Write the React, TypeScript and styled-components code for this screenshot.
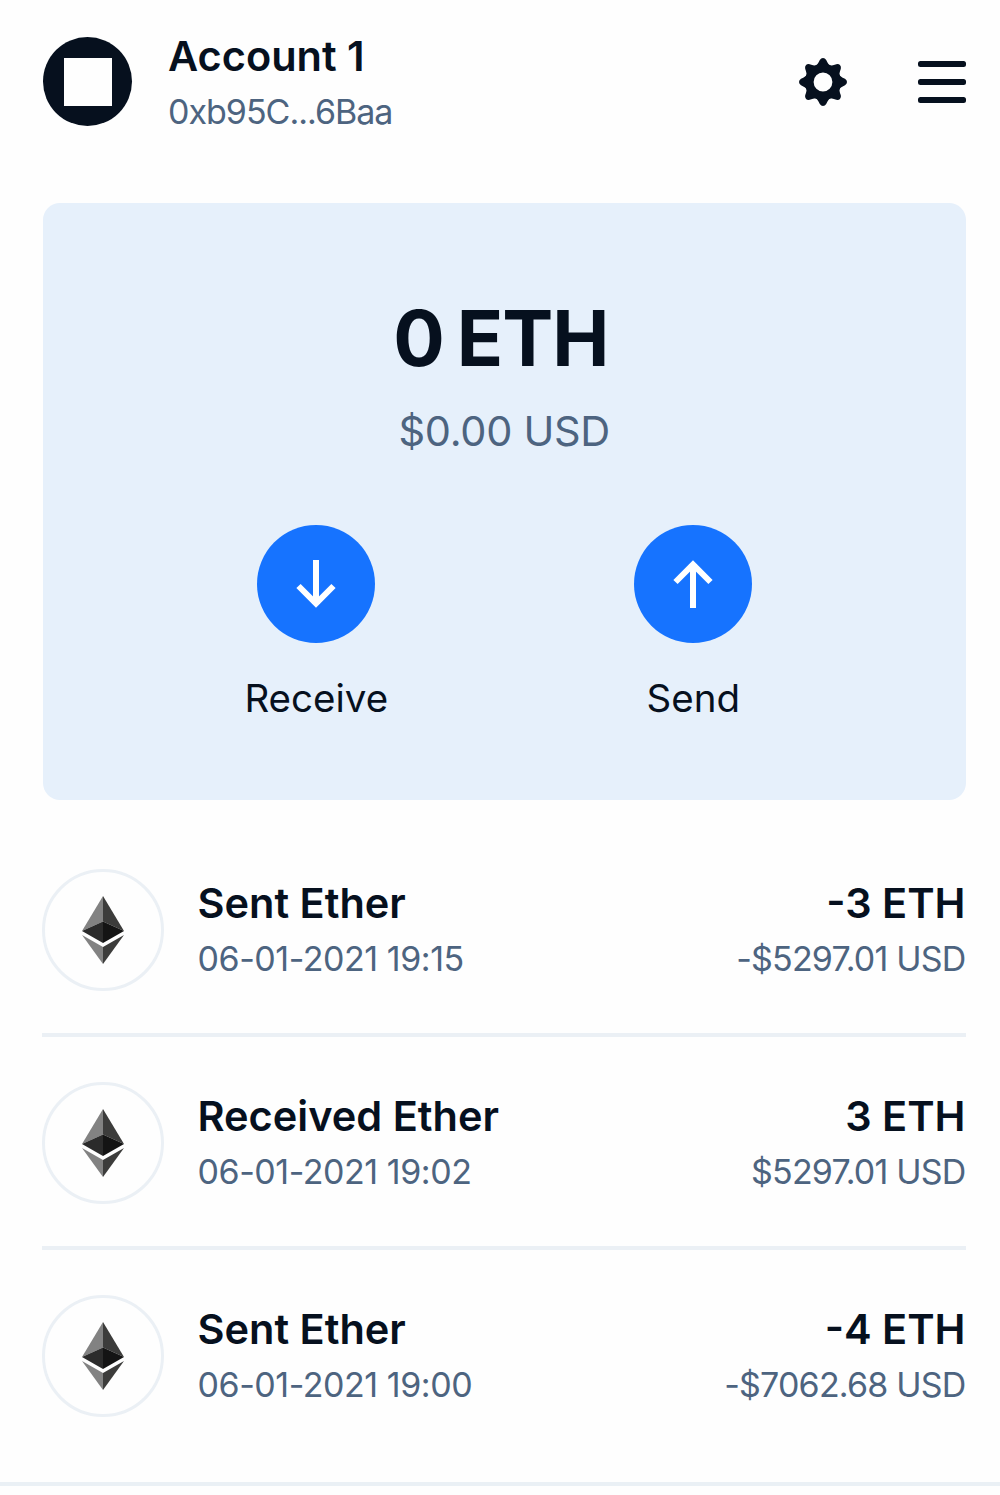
import React from 'react';
import styled, { createGlobalStyle } from 'styled-components';

const GlobalStyle = createGlobalStyle`
  *,
  *::before,
  *::after {
    box-sizing: border-box;
  }

  body {
    margin: 0;
    background: #fefefe;
    color: #06101e;
    font-family: 'Inter', 'Liberation Sans', sans-serif;
  }
`;

type Transaction = {
  title: string;
  date: string;
  amount: string;
  fiat: string;
};

const TRANSACTIONS: Transaction[] = [
  { title: 'Sent Ether', date: '06-01-2021 19:15', amount: '-3 ETH', fiat: '-$5297.01 USD' },
  { title: 'Received Ether', date: '06-01-2021 19:02', amount: '3 ETH', fiat: '$5297.01 USD' },
  { title: 'Sent Ether', date: '06-01-2021 19:00', amount: '-4 ETH', fiat: '-$7062.68 USD' },
];

const Wallet = styled.main`
  height: 1495px;
  overflow: hidden;
`;

const Header = styled.header`
  display: flex;
  align-items: flex-start;
  height: 203px;
  padding: 28px 33.5px 0 43px;
`;

const Avatar = styled.div`
  display: flex;
  align-items: center;
  justify-content: flex-end;
  width: 89px;
  height: 89px;
  margin: 9px 36px 0 0;
  padding-right: 20px;
  border-radius: 50%;
  background: #06101e;

  &::before {
    content: '';
    width: 48px;
    height: 48px;
    background: #fefefe;
  }
`;

const Lines = styled.div<{ $align?: 'left' | 'right' }>`
  flex: ${(props) => (props.$align === 'right' ? 'none' : 1)};
  text-align: ${(props) => props.$align || 'left'};
  white-space: nowrap;
`;

const Title = styled.div`
  font-size: 41.5px;
  font-weight: 600;
  line-height: 56px;
`;

const Subtitle = styled.div<{ $tracking: number }>`
  color: #4d6480;
  font-size: 34px;
  line-height: 56px;
  letter-spacing: ${(props) => props.$tracking}px;
`;

const HeaderActions = styled.div`
  display: flex;
  gap: 68.5px;
  margin-top: 29px;
`;

const IconButton = styled.button`
  display: flex;
  padding: 0;
  border: none;
  background: none;
  color: #06101e;
  cursor: pointer;
`;

const Card = styled.section`
  display: flex;
  flex-direction: column;
  align-items: center;
  height: 597px;
  margin: 0 34.5px 0 43px;
  padding-top: 87px;
  border-radius: 17px;
  background: #e6f0fb;
`;

const Balance = styled.h1`
  margin: 0;
  padding-right: 7px;
  font-size: 76.5px;
  font-weight: 700;
  line-height: 96px;
  letter-spacing: -1.1px;
  word-spacing: -4px;
`;

const FiatBalance = styled.p`
  margin: 17px 0 66px;
  color: #4d6480;
  font-size: 41.5px;
  line-height: 56px;
  letter-spacing: -0.3px;
`;

const Actions = styled.div`
  display: flex;
  gap: 235px;
  padding-left: 1px;
`;

const Action = styled.div`
  display: flex;
  flex-direction: column;
  align-items: center;
  gap: 27px;
  width: 142px;
  font-size: 38.5px;
  line-height: 56px;
`;

const RoundButton = styled.button`
  display: flex;
  align-items: center;
  justify-content: center;
  width: 118px;
  height: 118px;
  padding: 0;
  border: none;
  border-radius: 50%;
  background: #1673ff;
  cursor: pointer;
`;

const List = styled.ul`
  margin: 0;
  padding: 24px 34.5px 0 42px;
  list-style: none;
`;

const Row = styled.li`
  display: flex;
  align-items: flex-start;
  height: 213px;
  padding-top: 51px;
  border-bottom: 4px solid #ebf0f5;

  &:last-child {
    border-bottom: none;
  }
`;

const TokenBadge = styled.div`
  display: flex;
  align-items: center;
  justify-content: center;
  width: 122px;
  height: 122px;
  margin: -6px 33.5px 0 0;
  border: 3px solid #ebf0f5;
  border-radius: 50%;
`;

const Footer = styled.footer`
  height: 20px;
  margin-top: 19px;
  border-top: 4px solid #eaf0f5;
`;

const GearIcon = () => (
  <svg width="50" height="50" viewBox="-25 -25 50 50" aria-hidden="true">
    <g fill="currentColor">
      {[0, 45, 90, 135, 180, 225, 270, 315].map((angle) => (
        <path
          key={angle}
          transform={`rotate(${angle})`}
          d="M-8 -15 C-6 -17 -4.8 -18.5 -3.2 -22 Q-2 -24 0 -24 Q2 -24 3.2 -22 C4.8 -18.5 6 -17 8 -15 Z"
        />
      ))}
    </g>
    <circle r="13.8" fill="none" stroke="currentColor" strokeWidth="8.8" />
  </svg>
);

const MenuIcon = () => (
  <svg width="50" height="50" viewBox="0 0 50 50" aria-hidden="true">
    <g fill="currentColor">
      <rect x="1" y="4" width="48" height="6" rx="2.5" />
      <rect x="1" y="22" width="48" height="6" rx="2.5" />
      <rect x="1" y="40" width="48" height="6" rx="2.5" />
    </g>
  </svg>
);

const ArrowIcon = ({ up }: { up?: boolean }) => (
  <svg width="50" height="50" viewBox="-25 -25 50 50" aria-hidden="true">
    <path
      d="M0 -24 V20 M-17.5 2 L0 19.5 L17.5 2"
      transform={up ? 'rotate(180)' : undefined}
      fill="none"
      stroke="#fff"
      strokeWidth="6"
    />
  </svg>
);

const EtherIcon = () => (
  <svg width="44" height="70" viewBox="0 0 44 70" aria-hidden="true">
    <path d="M22 1 L1 36 L22 26.5 Z" fill="#828282" />
    <path d="M22 1 L43 36 L22 26.5 Z" fill="#3c3c3b" />
    <path d="M1 36 L22 26.5 V48 Z" fill="#2b2b2b" />
    <path d="M43 36 L22 26.5 V48 Z" fill="#141414" />
    <path d="M1 40 L22 52 V69 Z" fill="#828282" />
    <path d="M43 40 L22 52 V69 Z" fill="#3c3c3b" />
  </svg>
);

const TransactionRow = ({ title, date, amount, fiat }: Transaction) => (
  <Row>
    <TokenBadge>
      <EtherIcon />
    </TokenBadge>
    <Lines>
      <Title>{title}</Title>
      <Subtitle $tracking={-0.45}>{date}</Subtitle>
    </Lines>
    <Lines $align="right">
      <Title>{amount}</Title>
      <Subtitle $tracking={-0.8}>{fiat}</Subtitle>
    </Lines>
  </Row>
);

const App = () => (
  <>
    <GlobalStyle />
    <Wallet>
      <Header>
        <Avatar />
        <Lines>
          <Title>Account 1</Title>
          <Subtitle $tracking={-1}>0xb95C...6Baa</Subtitle>
        </Lines>
        <HeaderActions>
          <IconButton aria-label="Settings">
            <GearIcon />
          </IconButton>
          <IconButton aria-label="Menu">
            <MenuIcon />
          </IconButton>
        </HeaderActions>
      </Header>
      <Card>
        <Balance>0 ETH</Balance>
        <FiatBalance>$0.00 USD</FiatBalance>
        <Actions>
          <Action>
            <RoundButton aria-label="Receive">
              <ArrowIcon />
            </RoundButton>
            Receive
          </Action>
          <Action>
            <RoundButton aria-label="Send">
              <ArrowIcon up />
            </RoundButton>
            Send
          </Action>
        </Actions>
      </Card>
      <List>
        {TRANSACTIONS.map((transaction) => (
          <TransactionRow key={transaction.date} {...transaction} />
        ))}
      </List>
      <Footer />
    </Wallet>
  </>
);

export default App;
